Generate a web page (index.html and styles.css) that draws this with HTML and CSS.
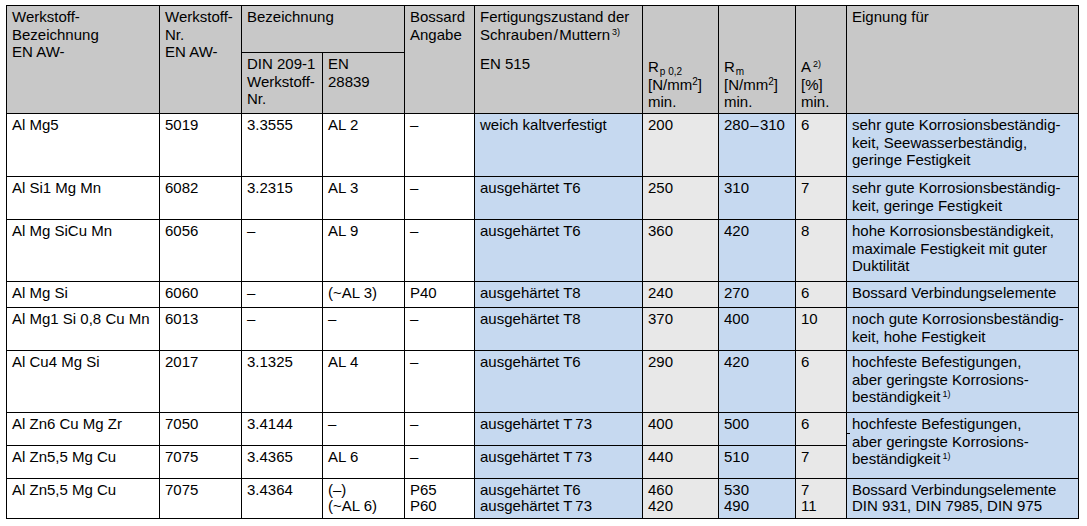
FILE: index.html
```html
<!DOCTYPE html>
<html lang="de">
<head>
<meta charset="utf-8">
<title>Aluminium Werkstoffe</title>
<link rel="stylesheet" href="styles.css">
</head>
<body>
<div class="page">
<table class="spec">
  <colgroup>
    <col class="c1"><col class="c2"><col class="c3"><col class="c4"><col class="c5">
    <col class="c6 blue"><col class="c7 grey"><col class="c8 blue"><col class="c9 grey"><col class="c10 blue">
  </colgroup>
  <thead>
    <tr class="h1">
      <th rowspan="2">Werkstoff-<br>Bezeichnung<br>EN AW-</th>
      <th rowspan="2">Werkstoff-<br>Nr.<br>EN AW-</th>
      <th colspan="2">Bezeichnung</th>
      <th rowspan="2">Bossard<br>Angabe</th>
      <th rowspan="2"><div>Fertigungszustand der<br>Schrauben&#8202;/&#8202;Muttern<sup class="fn">3)</sup></div><div class="en515">EN 515</div></th>
      <th rowspan="2" class="bot">R<sub class="sb">p 0,2</sub><br>[N/mm<sup class="sq">2</sup>]<br>min.</th>
      <th rowspan="2" class="bot">R<sub class="sb">m</sub><br>[N/mm<sup class="sq">2</sup>]<br>min.</th>
      <th rowspan="2" class="bot">A<sup class="fn">2)</sup><br>[%]<br>min.</th>
      <th rowspan="2">Eignung für</th>
    </tr>
    <tr class="h2">
      <th>DIN 209-1<br>Werkstoff-<br>Nr.</th>
      <th>EN<br>28839</th>
    </tr>
  </thead>
  <tbody>
    <tr class="r63">
      <td>Al Mg5</td><td>5019</td><td>3.3555</td><td>AL 2</td><td>–</td>
      <td>weich kaltverfestigt</td><td>200</td><td>280&#8202;–&#8202;310</td><td>6</td>
      <td>sehr gute Korrosionsbeständig-<br>keit, Seewasserbeständig,<br>geringe Festigkeit</td>
    </tr>
    <tr class="r43">
      <td>Al Si1 Mg Mn</td><td>6082</td><td>3.2315</td><td>AL 3</td><td>–</td>
      <td>ausgehärtet T6</td><td>250</td><td>310</td><td>7</td>
      <td>sehr gute Korrosionsbeständig-<br>keit, geringe Festigkeit</td>
    </tr>
    <tr class="r62">
      <td>Al Mg SiCu Mn</td><td>6056</td><td>–</td><td>AL 9</td><td>–</td>
      <td>ausgehärtet T6</td><td>360</td><td>420</td><td>8</td>
      <td>hohe Korrosionsbeständigkeit,<br>maximale Festigkeit mit guter<br>Duktilität</td>
    </tr>
    <tr class="r26">
      <td>Al Mg Si</td><td>6060</td><td>–</td><td>(~AL 3)</td><td>P40</td>
      <td>ausgehärtet T8</td><td>240</td><td>270</td><td>6</td>
      <td>Bossard Verbindungselemente</td>
    </tr>
    <tr class="r43">
      <td>Al Mg1 Si 0,8 Cu Mn</td><td>6013</td><td>–</td><td>–</td><td>–</td>
      <td>ausgehärtet T8</td><td>370</td><td>400</td><td>10</td>
      <td>noch gute Korrosionsbeständig-<br>keit, hohe Festigkeit</td>
    </tr>
    <tr class="r62">
      <td>Al Cu4 Mg Si</td><td>2017</td><td>3.1325</td><td>AL 4</td><td>–</td>
      <td>ausgehärtet T6</td><td>290</td><td>420</td><td>6</td>
      <td>hochfeste Befestigungen,<br>aber geringste Korrosions-<br>beständigkeit<sup class="fn">1)</sup></td>
    </tr>
    <tr class="r33">
      <td>Al Zn6 Cu Mg Zr</td><td>7050</td><td>3.4144</td><td>–</td><td>–</td>
      <td>ausgehärtet T&#8201;73</td><td>400</td><td>500</td><td>6</td>
      <td rowspan="2" class="merged">hochfeste Befestigungen,<br>aber geringste Korrosions-<br>beständigkeit<sup class="fn">1)</sup></td>
    </tr>
    <tr class="r33">
      <td>Al Zn5,5 Mg Cu</td><td>7075</td><td>3.4365</td><td>AL 6</td><td>–</td>
      <td>ausgehärtet T&#8201;73</td><td>440</td><td>510</td><td>7</td>
    </tr>
    <tr class="r40">
      <td>Al Zn5,5 Mg Cu</td><td>7075</td><td>3.4364</td><td>(–)<br>(~AL 6)</td><td>P65<br>P60</td>
      <td>ausgehärtet T6<br>ausgehärtet T&#8201;73</td><td>460<br>420</td><td>530<br>490</td><td>7<br>11</td>
      <td>Bossard Verbindungselemente<br>DIN 931, DIN 7985, DIN 975</td>
    </tr>
  </tbody>
</table>
</div>
</body>
</html>
```
FILE: styles.css
```css
html, body {
  margin: 0;
  padding: 0;
  background: #ffffff;
}

.page {
  padding: 5px 0 0 6px;
}

.spec {
  border-collapse: collapse;
  table-layout: fixed;
  width: 1072px;
  font-family: "Liberation Sans", Arial, sans-serif;
  font-size: 15px;
  line-height: 17.6px;
  color: #000000;
}

.c1 { width: 153px; }
.c2 { width: 82px; }
.c3 { width: 81px; }
.c4 { width: 82px; }
.c5 { width: 70px; }
.c6 { width: 168px; }
.c7 { width: 76px; }
.c8 { width: 77px; }
.c9 { width: 51px; }
.c10 { width: 232px; }

.blue { background: #c6d9f0; }
.grey { background: #e8e8e8; }

.spec th,
.spec td {
  border: 1px solid #000000;
  padding: 2px 4px 4px 5px;
  text-align: left;
  vertical-align: top;
  font-weight: normal;
  white-space: nowrap;
  overflow: hidden;
}

.spec th {
  background: #c8c8c8;
}

.spec th.bot {
  vertical-align: bottom;
  padding-bottom: 2px;
}

.en515 {
  margin-top: 12px;
}

.merged {
  position: relative;
}

.merged::before {
  content: "";
  position: absolute;
  left: 0;
  top: 20px;
  width: 3px;
  height: 1px;
  background: #000000;
}

.h1 { height: 47px; }
.h2 { height: 61px; }
.r63 { height: 63px; }
.r62 { height: 62px; }
.r43 { height: 43px; }
.r40 { height: 40px; }
.r33 { height: 33px; }
.r26 { height: 26px; }

.r40 td {
  line-height: 16px;
  padding-top: 3px;
}

.fn {
  font-size: 9px;
  line-height: 0;
  vertical-align: 5px;
  margin-left: 2px;
}

.sq {
  font-size: 10px;
  line-height: 0;
  vertical-align: 5px;
}

.sb {
  font-size: 10px;
  line-height: 0;
  vertical-align: -3px;
  margin-left: 1px;
}
```
